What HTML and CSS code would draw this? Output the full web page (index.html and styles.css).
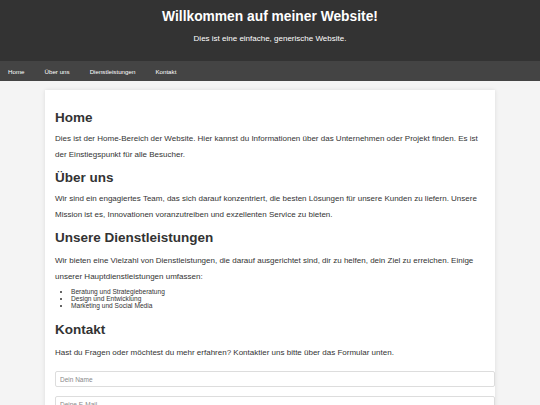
FILE: index.html
```html
<!DOCTYPE html>
<html lang="de">
<head>
<meta charset="utf-8">
<title>Willkommen</title>
<link rel="stylesheet" href="styles.css">
</head>
<body>
<header class="site-header">
  <h1 class="site-title">Willkommen auf meiner Website!</h1>
  <p class="site-tagline">Dies ist eine einfache, generische Website.</p>
</header>
<nav class="site-nav">
  <a href="#home">Home</a>
  <a href="#ueber">Über uns</a>
  <a href="#dienste">Dienstleistungen</a>
  <a href="#kontakt">Kontakt</a>
</nav>
<main class="container">
  <section id="home" class="section">
    <h2>Home</h2>
    <p>Dies ist der Home-Bereich der Website. Hier kannst du Informationen über das Unternehmen oder Projekt finden. Es ist der Einstiegspunkt für alle Besucher.</p>
  </section>
  <section id="ueber" class="section">
    <h2>Über uns</h2>
    <p>Wir sind ein engagiertes Team, das sich darauf konzentriert, die besten Lösungen für unsere Kunden zu liefern. Unsere Mission ist es, Innovationen voranzutreiben und exzellenten Service zu bieten.</p>
  </section>
  <section id="dienste" class="section section-wide">
    <h2>Unsere Dienstleistungen</h2>
    <p>Wir bieten eine Vielzahl von Dienstleistungen, die darauf ausgerichtet sind, dir zu helfen, dein Ziel zu erreichen. Einige unserer Hauptdienstleistungen umfassen:</p>
    <ul class="services">
      <li>Beratung und Strategieberatung</li>
      <li>Design und Entwicklung</li>
      <li>Marketing und Social Media</li>
    </ul>
  </section>
  <section id="kontakt" class="section section-wide">
    <h2>Kontakt</h2>
    <p>Hast du Fragen oder möchtest du mehr erfahren? Kontaktier uns bitte über das Formular unten.</p>
    <form class="contact-form">
      <input type="text" placeholder="Dein Name">
      <input type="email" placeholder="Deine E-Mail">
    </form>
  </section>
</main>
</body>
</html>
```
FILE: styles.css
```css
* { box-sizing: content-box; }
html, body { margin: 0; padding: 0; }
body {
  background: #f4f4f4;
  color: #333;
  font-family: "Liberation Sans", Arial, sans-serif;
  font-size: 8px;
}
.site-header {
  background: #333;
  color: #fff;
  text-align: center;
  padding: 9px 0 17px;
}
.site-title {
  margin: 0;
  font-size: 13.8px;
  line-height: 16px;
}
.site-tagline {
  margin: 9px 0 0;
  font-size: 8px;
  line-height: 10px;
}
.site-nav {
  background: #444;
  display: flex;
  gap: 20px;
  padding: 0 8px;
  height: 20px;
  align-items: center;
}
.site-nav a {
  color: #fff;
  text-decoration: none;
  font-size: 6.2px;
  line-height: 20px;
  padding-top: 2px;
}
.container {
  background: #fff;
  width: 430px;
  margin: 9px auto 0;
  padding: 10px;
  box-shadow: 0 0 4px rgba(0,0,0,0.1);
}
.section h2 {
  font-size: 13.5px;
  line-height: 16px;
  margin: 7px 0 0;
}
#home h2 { margin-top: 10px; }
.section p {
  margin: 5px 0 0;
  line-height: 16px;
}
.section-wide p { margin-top: 7px; }
.services {
  margin: 3px 0 13px;
  padding-left: 16px;
  font-size: 6.6px;
  line-height: 7px;
}
.contact-form {
  margin-top: 10px;
}
.contact-form input {
  display: block;
  width: 100%;
  padding: 4px;
  height: 6px;
  margin: 0 0 9px;
  border: 1px solid #ddd;
  border-radius: 2px;
  font-family: "Liberation Sans", Arial, sans-serif;
  font-size: 6.5px;
  line-height: 6px;
  color: #333;
  background: #fff;
}
.contact-form input::placeholder { color: #888; }
```
